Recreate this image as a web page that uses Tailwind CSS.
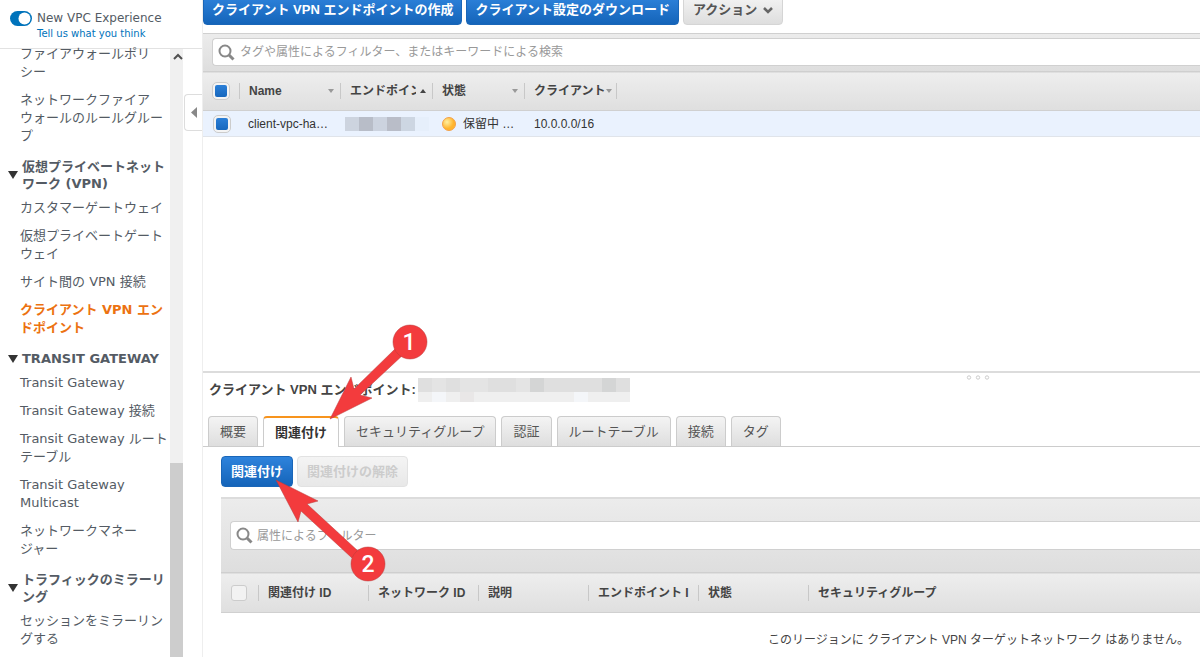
<!DOCTYPE html>
<html lang="ja">
<head>
<meta charset="utf-8">
<title>クライアント VPN エンドポイント</title>
<script src="https://cdn.jsdelivr.net/npm/@tailwindcss/browser@4"></script>
</head>
<body class="relative flex h-screen overflow-hidden bg-white font-['Liberation_Sans','Noto_Sans_CJK_JP',sans-serif] text-xs text-[#444]">

<aside class="relative flex w-[203px] shrink-0 flex-col border-r border-[#eee] font-['DejaVu_Sans','Noto_Sans_CJK_JP',sans-serif] text-[13px] text-[#545b64]">
  <header class="h-[49px] shrink-0 border-b border-[#e2e2e2] pt-[10px] pl-[10px]">
    <label class="flex items-center gap-[5px] text-xs leading-4">
      <input type="checkbox" checked class="peer sr-only">
      <svg class="h-[15px] w-[22px]" viewBox="0 0 22 15"><rect width="22" height="15" rx="7.500" fill="#0073bb"/><circle cx="14.500" cy="7.500" r="6" fill="#fff"/></svg>
      <span>New VPC Experience</span>
    </label>
    <a href="#" class="block pl-[27px] text-[10px] leading-4 text-[#0073bb]">Tell us what you think</a>
  </header>
  <div class="flex min-h-0 flex-1">
    <nav class="-mt-1 w-[170px] shrink-0 pl-5 leading-[18px] whitespace-nowrap">
      <ul class="flex flex-col gap-[10px]">
        <li><a href="#">ファイアウォールポリ<br>シー</a></li>
        <li><a href="#">ネットワークファイア<br>ウォールのルールグルー<br>プ</a></li>
      </ul>
      <h2 class="mt-[13px] mb-[7px] -ml-3 flex items-center gap-[4px] font-bold leading-[17px]"><svg class="h-2 w-[10px]" viewBox="0 0 10 8"><path d="M0 0h10L5 8z" fill="#333"/></svg><span>仮想プライベートネット<br>ワーク (VPN)</span></h2>
      <ul class="flex flex-col gap-[10px]">
        <li><a href="#">カスタマーゲートウェイ</a></li>
        <li><a href="#">仮想プライベートゲート<br>ウェイ</a></li>
        <li><a href="#">サイト間の VPN 接続</a></li>
        <li><a href="#" class="font-bold text-[#ec7211]">クライアント VPN エン<br>ドポイント</a></li>
      </ul>
      <h2 class="mt-[13px] mb-[7px] -ml-3 flex items-center gap-[4px] font-bold leading-[17px]"><svg class="h-2 w-[10px]" viewBox="0 0 10 8"><path d="M0 0h10L5 8z" fill="#333"/></svg><span>TRANSIT GATEWAY</span></h2>
      <ul class="flex flex-col gap-[10px]">
        <li><a href="#">Transit Gateway</a></li>
        <li><a href="#">Transit Gateway 接続</a></li>
        <li><a href="#">Transit Gateway ルート<br>テーブル</a></li>
        <li><a href="#">Transit Gateway<br>Multicast</a></li>
        <li><a href="#">ネットワークマネー<br>ジャー</a></li>
      </ul>
      <h2 class="mt-[13px] mb-[7px] -ml-3 flex items-center gap-[4px] font-bold leading-[17px]"><svg class="h-2 w-[10px]" viewBox="0 0 10 8"><path d="M0 0h10L5 8z" fill="#333"/></svg><span>トラフィックのミラーリ<br>ング</span></h2>
      <ul><li><a href="#">セッションをミラーリン<br>グする</a></li></ul>
    </nav>
    <div class="flex w-[13px] flex-col bg-[#f0f0f0]">
      <svg class="mt-1 h-2 w-full shrink-0" viewBox="0 0 13 8"><path d="M4 6l4-4 4 4" fill="none" stroke="#505050" stroke-width="2"/></svg>
      <div class="flex-[402]"></div>
      <div class="flex-[194] bg-[#cdcdcd]"></div>
    </div>
  </div>
  <button aria-label="サイドバーを閉じる" class="absolute top-[94px] right-0 flex h-[37px] w-[18px] items-center justify-center rounded-l border border-r-0 border-[#ddd] bg-white"><svg class="h-[11px] w-[6px]" viewBox="0 0 6 11"><path d="M6 0v11L0 5.500z" fill="#888"/></svg></button>
</aside>

<main class="flex min-w-0 flex-1 flex-col">
  <div class="-mt-[5px] flex shrink-0 gap-1 text-[13px] leading-[28px] font-bold whitespace-nowrap">
    <button class="rounded border border-[#1a66b8] bg-linear-to-b from-[#2e83dc] to-[#1464b9] px-2 text-white">クライアント VPN エンドポイントの作成</button>
    <button class="rounded border border-[#1a66b8] bg-linear-to-b from-[#2e83dc] to-[#1464b9] px-2 text-white">クライアント設定のダウンロード</button>
    <button class="flex items-center gap-[6px] rounded border border-[#d5d5d5] bg-linear-to-b from-[#f4f4f4] to-[#dedede] px-[9px] text-[#555]">アクション<svg class="h-[7px] w-[10px]" viewBox="0 0 10 7"><path d="M1 1l4 4 4-4" fill="none" stroke="#666" stroke-width="2.500"/></svg></button>
  </div>

  <section class="mt-2 flex h-[340px] shrink-0 flex-col border-b-2 border-[#dcdcdc]">
    <div class="border-t border-[#d0d0d0] bg-linear-to-b from-[#ececec] to-[#dedede] pt-1 pb-[5px] pl-[9px]">
      <label class="flex h-7 items-center gap-[5px] rounded-l border border-r-0 border-[#d0d0d0] bg-white pl-[5px]">
        <svg class="size-[17px]" viewBox="0 0 17 17"><circle cx="7" cy="7" r="5.500" fill="none" stroke="#888" stroke-width="2"/><path d="M11 11l4.500 4.500" stroke="#888" stroke-width="3"/></svg>
        <input type="text" aria-label="フィルター" placeholder="タグや属性によるフィルター、またはキーワードによる検索" class="min-w-0 flex-1 outline-none placeholder:text-[#999]">
      </label>
    </div>
    <table class="w-full table-fixed border-collapse text-left whitespace-nowrap">
      <colgroup><col class="w-[36px]"><col class="w-[101px]"><col class="w-[92px]"><col class="w-[92px]"><col class="w-[92px]"><col></colgroup>
      <thead>
        <tr class="h-[39px] border-y border-t-[#cfcfcf] border-b-[#d0d0d0] bg-linear-to-b from-[#eeeeee] to-[#dfdfdf]">
          <th class="p-0 pl-[10px]"><input type="checkbox" checked aria-label="すべて選択" class="block size-4 appearance-none rounded-[4px] border-2 border-[#f4f4f4] bg-linear-to-b from-[#2e83dc] to-[#1464b9] bg-origin-border outline outline-[#ccc]"></th>
          <th class="p-0"><div class="flex h-4 items-center justify-between border-l border-[#c8c8c8] pr-[6px] pl-[9px]">Name<svg class="h-1 w-[6px]" viewBox="0 0 6 4"><path d="M0 0h6L3 4z" fill="#999"/></svg></div></th>
          <th class="p-0"><div class="flex h-4 items-center justify-between gap-1 border-l border-[#c8c8c8] pr-[6px] pl-[9px]"><span class="overflow-hidden">エンドポイン</span><svg class="h-1 w-[6px] shrink-0" viewBox="0 0 6 4"><path d="M0 4h6L3 0z" fill="#444"/></svg></div></th>
          <th class="p-0"><div class="flex h-4 items-center justify-between border-l border-[#c8c8c8] pr-[6px] pl-[9px]">状態<svg class="h-1 w-[6px]" viewBox="0 0 6 4"><path d="M0 0h6L3 4z" fill="#999"/></svg></div></th>
          <th class="p-0"><div class="flex h-4 items-center justify-between border-l border-[#c8c8c8] pr-1 pl-[9px]">クライアント<svg class="h-1 w-[6px] shrink-0" viewBox="0 0 6 4"><path d="M0 0h6L3 4z" fill="#999"/></svg></div></th>
          <th class="p-0"><div class="h-4 border-l border-[#c8c8c8]"></div></th>
        </tr>
      </thead>
      <tbody>
        <tr class="h-[26px] border-b border-[#e0e4ea] bg-[#eaf2fe] text-[#333]">
          <td class="p-0 pl-[11px]"><input type="checkbox" checked aria-label="client-vpc を選択" class="block size-4 appearance-none rounded-[4px] border-2 border-[#f4f4f4] bg-linear-to-b from-[#2e83dc] to-[#1464b9] bg-origin-border outline outline-[#ccc]"></td>
          <td class="p-0 pl-[9px]">client-vpc-ha…</td>
          <td class="p-0 pl-[5px]"><svg class="h-[14px] w-[84px]" viewBox="0 0 84 14"><path d="M0 0h14v14H0z" fill="#cdd4df"/><path d="M14 0h14v14H14z" fill="#b8bdc8"/><path d="M28 0h14v14H28z" fill="#ccd3df"/><path d="M42 0h14v14H42z" fill="#b9bdc8"/><path d="M56 0h14v14H56z" fill="#cdd6e2"/><path d="M70 0h14v14H70z" fill="#e6effb"/></svg></td>
          <td class="p-0 pl-[10px]"><div class="flex items-center gap-[7px]"><svg class="size-[14px]" viewBox="0 0 14 14"><defs><radialGradient id="sun" cx=".35" cy=".35"><stop offset="0" stop-color="#fff0a0"/><stop offset="1" stop-color="#ffb52e"/></radialGradient></defs><circle cx="7" cy="7" r="6.500" fill="url(#sun)" stroke="#f2a04a"/></svg>保留中 …</div></td>
          <td class="p-0 pl-[10px]">10.0.0.0/16</td>
          <td></td>
        </tr>
      </tbody>
    </table>
  </section>

  <section class="flex min-h-0 flex-1 flex-col">
    <div class="flex h-[43px] shrink-0 pl-[6px]">
      <h1 class="mt-[7px] text-[13px] leading-5 font-bold">クライアント VPN エンドポイント:</h1>
      <svg class="mt-[5px] ml-[2px] h-6 w-[212px]" viewBox="0 0 212 24"><path d="M0 0h212v14H0z" fill="#dfdfdf"/><path d="M14 0h14v14H14zM42 0h28v14H42zM98 0h14v14H98z" fill="#e4e4e4"/><path d="M112 0h14v14h-14zM184 0h14v14h-14z" fill="#d4d5d5"/><path d="M0 14h212v10H0z" fill="#efefef"/><path d="M14 14h14v10H14zM156 14h14v10h-14z" fill="#f4f6f9"/><path d="M42 14h14v10H42z" fill="#e9e7e7"/></svg>
      <svg class="mt-[2px] mr-[210px] ml-auto h-[5px] w-6" viewBox="0 0 24 5"><g fill="none" stroke="#ccc"><circle cx="3" cy="2.500" r="1.700"/><circle cx="12" cy="2.500" r="1.700"/><circle cx="21" cy="2.500" r="1.700"/></g></svg>
    </div>
    <div role="tablist" class="flex h-[31px] shrink-0 gap-[5px] border-b border-[#ccc] pl-[5px] text-[13px] whitespace-nowrap text-[#555]">
      <button role="tab" class="rounded-t border border-b-0 border-[#ccc] bg-linear-to-b from-[#f4f4f4] to-[#dedede] px-[11px]">概要</button>
      <button role="tab" aria-selected="true" class="-mb-px rounded-t border border-t-2 border-b-0 border-[#ccc] border-t-[#f7941d] bg-white px-[11px] font-bold text-[#333]">関連付け</button>
      <button role="tab" class="rounded-t border border-b-0 border-[#ccc] bg-linear-to-b from-[#f4f4f4] to-[#dedede] px-[11px]">セキュリティグループ</button>
      <button role="tab" class="rounded-t border border-b-0 border-[#ccc] bg-linear-to-b from-[#f4f4f4] to-[#dedede] px-[11px]">認証</button>
      <button role="tab" class="rounded-t border border-b-0 border-[#ccc] bg-linear-to-b from-[#f4f4f4] to-[#dedede] px-[11px]">ルートテーブル</button>
      <button role="tab" class="rounded-t border border-b-0 border-[#ccc] bg-linear-to-b from-[#f4f4f4] to-[#dedede] px-[11px]">接続</button>
      <button role="tab" class="rounded-t border border-b-0 border-[#ccc] bg-linear-to-b from-[#f4f4f4] to-[#dedede] px-[11px]">タグ</button>
    </div>
    <div class="pt-[9px] pl-[18px]">
      <div class="flex gap-1 text-[13px] leading-[29px] font-bold">
        <button class="rounded border border-[#1a66b8] bg-linear-to-b from-[#2e83dc] to-[#1464b9] px-[9px] text-white">関連付け</button>
        <button disabled class="rounded border border-[#e2e2e2] bg-linear-to-b from-[#f4f4f4] to-[#e8e8e8] px-[9px] text-[#ccc]">関連付けの解除</button>
      </div>
      <div class="mt-[10px] border-t-2 border-[#dcdcdc] bg-linear-to-b from-[#ececec] to-[#dedede] py-[22px] pl-[9px]">
        <label class="flex h-[29px] items-center gap-1 rounded-l border border-r-0 border-[#d0d0d0] bg-white pl-[5px]">
          <svg class="size-[17px]" viewBox="0 0 17 17"><circle cx="7" cy="7" r="5.500" fill="none" stroke="#888" stroke-width="2"/><path d="M11 11l4.500 4.500" stroke="#888" stroke-width="3"/></svg>
          <input type="text" aria-label="関連付けフィルター" placeholder="属性によるフィルター" class="min-w-0 flex-1 outline-none placeholder:text-[#999]">
        </label>
      </div>
      <table class="w-full table-fixed border-collapse text-left whitespace-nowrap">
        <colgroup><col class="w-[37px]"><col class="w-[110px]"><col class="w-[110px]"><col class="w-[110px]"><col class="w-[110px]"><col class="w-[110px]"><col></colgroup>
        <thead>
          <tr class="h-[40px] border-y border-t-[#cfcfcf] border-b-[#d0d0d0] bg-linear-to-b from-[#eeeeee] to-[#dfdfdf]">
            <th class="p-0 pl-[10px]"><input type="checkbox" aria-label="すべて選択" class="block size-4 appearance-none rounded-[3px] border border-[#ccc] bg-[#f2f2f2]"></th>
            <th class="p-0"><div class="h-4 border-l border-[#c8c8c8] pl-[9px]">関連付け ID</div></th>
            <th class="p-0"><div class="h-4 border-l border-[#c8c8c8] pl-[9px]">ネットワーク ID</div></th>
            <th class="p-0"><div class="h-4 border-l border-[#c8c8c8] pl-[9px]">説明</div></th>
            <th class="p-0"><div class="h-4 border-l border-[#c8c8c8] pl-[9px]">エンドポイント I</div></th>
            <th class="p-0"><div class="h-4 border-l border-[#c8c8c8] pl-[9px]">状態</div></th>
            <th class="p-0"><div class="h-4 border-l border-[#c8c8c8] pl-[9px]">セキュリティグループ</div></th>
          </tr>
        </thead>
        <tbody><tr><td colspan="7" class="pt-[19px] pr-[11px] text-right">このリージョンに クライアント VPN ターゲットネットワーク はありません。</td></tr></tbody>
      </table>
    </div>
  </section>
</main>

<svg class="pointer-events-none absolute top-[320px] left-[270px] h-[270px] w-[170px]" viewBox="270 320 170 270">
  <g fill="#f33b3d" stroke="#b83a3a" stroke-width=".5">
    <path d="M330 419L351 377L354 389L397 347L404 354L360 395L372 398Z"/>
    <path d="M276 480L318 501L307 504L358 551L352 558L301 511L298 522Z"/>
    <circle cx="410" cy="342" r="17"/><circle cx="368" cy="564" r="17"/>
  </g>
  <g fill="#fff" font-family="Roboto, sans-serif" font-size="23" font-weight="500" text-anchor="middle"><text x="409" y="350">1</text><text x="368" y="572">2</text></g>
</svg>
</body>
</html>
